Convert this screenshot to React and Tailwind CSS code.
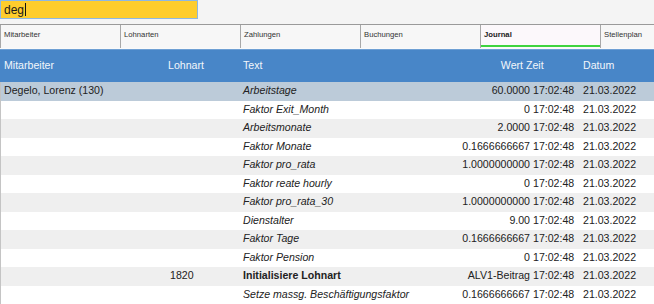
import React from "react";

const tabs = ["Mitarbeiter", "Lohnarten", "Zahlungen", "Buchungen", "Journal", "Stellenplan"];

const rows = [
  { ma: "Degelo, Lorenz (130)", la: "", text: "Arbeitstage", wert: "60.0000", style: "italic", selected: true },
  { ma: "", la: "", text: "Faktor Exit_Month", wert: "0", style: "italic" },
  { ma: "", la: "", text: "Arbeitsmonate", wert: "2.0000", style: "italic" },
  { ma: "", la: "", text: "Faktor Monate", wert: "0.1666666667", style: "italic" },
  { ma: "", la: "", text: "Faktor pro_rata", wert: "1.0000000000", style: "italic" },
  { ma: "", la: "", text: "Faktor reate hourly", wert: "0", style: "italic" },
  { ma: "", la: "", text: "Faktor pro_rata_30", wert: "1.0000000000", style: "italic" },
  { ma: "", la: "", text: "Dienstalter", wert: "9.00", style: "italic" },
  { ma: "", la: "", text: "Faktor Tage", wert: "0.1666666667", style: "italic" },
  { ma: "", la: "", text: "Faktor Pension", wert: "0", style: "italic" },
  { ma: "", la: "1820", text: "Initialisiere Lohnart", wert: "ALV1-Beitrag", style: "bold" },
  { ma: "", la: "", text: "Setze massg. Beschäftigungsfaktor", wert: "0.1666666667", style: "italic" },
];

export default function App() {
  return (
    <div className="w-[654px] h-[304px] overflow-hidden bg-[#f4f4f4] font-['Liberation_Sans',Arial,sans-serif] text-[#222]">
      {/* search field */}
      <div className="h-[24px]">
        <div className="w-[198px] h-[19px] bg-[#fecd2c] border border-[#8eb8e2] flex items-center pl-[3px] text-[12px] leading-none text-[#1a1a1a]">
          deg
          <span className="inline-block w-px h-[13px] bg-[#111] ml-px" />
        </div>
      </div>

      {/* tabs */}
      <div className="flex h-[24px] border-t border-[#9a9a9a] bg-[#f7f7f7]">
        {tabs.map((t) => (
          <div
            key={t}
            className={
              "relative w-[120px] shrink-0 flex items-center pl-[3px] pb-[3px] text-[7.7px] border-l border-[#a8a8a8] " +
              (t === "Journal" ? "font-bold bg-[#fcf8fb] text-[#222]" : "text-[#333]")
            }
          >
            {t}
            {t === "Journal" && (
              <span className="absolute left-0 right-0 bottom-[1px] h-[2px] bg-[#3fd43f]" />
            )}
          </div>
        ))}
      </div>

      <div className="h-px bg-[#fafafa]" />

      {/* table header */}
      <div className="flex items-center h-[33px] bg-[#4886c8] border-t border-[#6fa0d4] text-[10.6px] text-[#f2f6fb]">
        <div className="w-[166px] pl-[4px]">Mitarbeiter</div>
        <div className="w-[77px] pl-[2px]">Lohnart</div>
        <div className="w-[200px]">Text</div>
        <div className="w-[83px] text-right pr-[3px]">Wert</div>
        <div className="w-[57px]">Zeit</div>
        <div className="flex-1">Datum</div>
      </div>

      {/* rows */}
      <div className="border-l border-[#c4c4c4]">
        {rows.map((r, i) => (
          <div
            key={i}
            className={
              "flex items-center h-[18.5px] text-[10.6px] whitespace-nowrap " +
              (r.selected ? "bg-[#bccbd9]" : i % 2 === 0 ? "bg-[#efefef]" : "bg-white")
            }
          >
            <div className="w-[165px] pl-[3px]">{r.ma}</div>
            <div className="w-[77px] pl-[4px]">{r.la}</div>
            <div className={"w-[200px] " + (r.style === "bold" ? "font-bold" : "italic")}>{r.text}</div>
            <div className="w-[87px] text-right">{r.wert}</div>
            <div className="w-[50px] pl-[3px]">17:02:48</div>
            <div className="flex-1 pl-[3px]">21.03.2022</div>
          </div>
        ))}
      </div>
    </div>
  );
}
